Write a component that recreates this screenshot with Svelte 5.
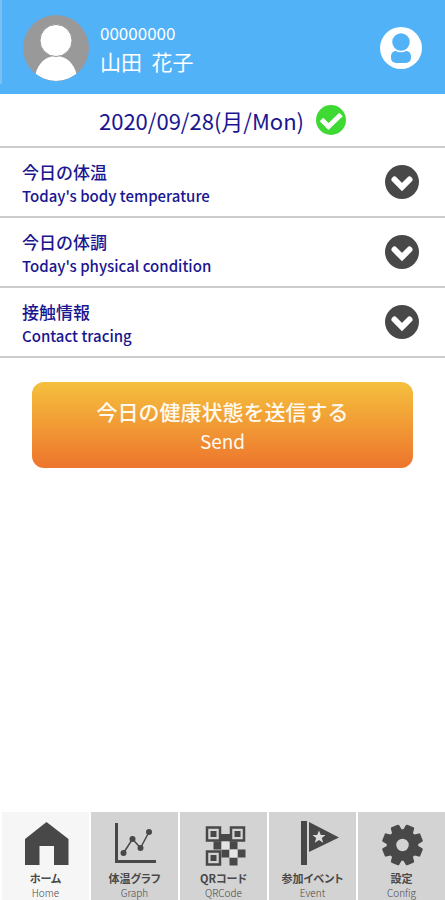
<script>
  const sections = [
    { ja: '今日の体温', en: "Today's body temperature" },
    { ja: '今日の体調', en: "Today's physical condition" },
    { ja: '接触情報', en: 'Contact tracing' }
  ];

  const tabs = [
    { id: 'home', ja: 'ホーム', en: 'Home' },
    { id: 'graph', ja: '体温グラフ', en: 'Graph' },
    { id: 'qr', ja: 'QRコード', en: 'QRCode' },
    { id: 'event', ja: '参加イベント', en: 'Event' },
    { id: 'config', ja: '設定', en: 'Config' }
  ];

  const teeth = [22.5, 67.5, 112.5, 157.5, 202.5, 247.5, 292.5, 337.5];
  let current = $state('home');
</script>

<div class="app">
  <header>
    <svg class="avatar" viewBox="0 0 66 66" aria-hidden="true">
      <clipPath id="avatar-clip"><circle cx="33" cy="33" r="33" /></clipPath>
      <circle cx="33" cy="33" r="33" fill="#999" />
      <g clip-path="url(#avatar-clip)">
        <path d="M12.500 59C15 49 22 41 33 41S51 49 53.500 59Q44 66 33 66T12.500 59Z" fill="#fff" />
      </g>
      <circle cx="33" cy="25.500" r="16" fill="#fff" stroke="#999" stroke-width="1" />
    </svg>
    <div class="user">
      <span class="number">00000000</span>
      <span class="name">山田&nbsp;&nbsp;花子</span>
    </div>
    <button class="account" aria-label="アカウント">
      <svg viewBox="0 0 42 42" aria-hidden="true">
        <circle cx="21" cy="21" r="21" fill="#fff" />
        <rect x="11" y="24" width="20" height="12" rx="5" fill="#52b2f8" />
        <circle cx="21" cy="15" r="9.500" fill="#52b2f8" stroke="#fff" stroke-width="1.500" />
      </svg>
    </button>
  </header>

  <main>
    <div class="date">
      <h1>2020/09/28(月/Mon)</h1>
      <svg viewBox="0 0 30 30" aria-hidden="true">
        <circle cx="15" cy="15" r="15" fill="#3fd934" />
        <path d="M5.500 14.500L12.500 21.500L25 9.500" fill="none" stroke="#fff" stroke-width="5" />
      </svg>
    </div>

    {#each sections as section}
      <button class="section">
        <span class="titles">
          <span class="ja">{section.ja}</span>
          <span class="en">{section.en}</span>
        </span>
        <svg viewBox="0 0 34 34" aria-hidden="true">
          <circle cx="17" cy="17" r="17" fill="#484848" />
          <path d="M9.500 14.500L17 22L24.500 14.500" fill="none" stroke="#fff" stroke-width="6" stroke-linecap="round" />
        </svg>
      </button>
    {/each}

    <button class="send">
      <span class="ja">今日の健康状態を送信する</span>
      <span class="en">Send</span>
    </button>
  </main>

  <nav>
    {#each tabs as tab}
      <button class="tab" class:active={current === tab.id} onclick={() => (current = tab.id)}>
        <svg viewBox="0 0 48 48" fill="#484848" aria-hidden="true">
          {#if tab.id === 'home'}
            <path d="M24.500 3L46.500 20V46H32V27H17.500V46H3V20Z" />
          {:else if tab.id === 'graph'}
            <path d="M4 4H7V41H45V44H4Z" />
            <path d="M12.500 34L21.500 20L29.500 29L38 13" fill="none" stroke="#484848" stroke-width="1.500" />
            <circle cx="12.500" cy="34" r="3" />
            <circle cx="21.500" cy="20" r="3" />
            <circle cx="29.500" cy="29" r="3" />
            <circle cx="38" cy="13" r="3" />
          {:else if tab.id === 'qr'}
            <g fill="none" stroke="#484848" stroke-width="2.500">
              <path d="M7 8.500H20V21.500H7ZM31 8.500H44V21.500H31ZM7 32.500H20V45.500H7Z" />
            </g>
            <path d="M10.500 12H16.500V18H10.500ZM34.500 12H40.500V18H34.500ZM10.500 36H16.500V42H10.500Z" />
            <path d="M21 15H30V22.500H21ZM13.500 22.500H21.500V30.500H13.500ZM29.500 22.500H37.500V30.500H29.500ZM21.500 30.500H29.500V38.500H21.500ZM37.500 30.500H45.500V38.500H37.500ZM29.500 38.500H37.500V46.500H29.500Z" />
            <path d="M21.500 22.500H29.500V30.500H21.500ZM29.500 30.500H37.500V38.500H29.500Z" fill="#e4e4e4" />
          {:else if tab.id === 'event'}
            <path d="M12 2H18V46H12Z" />
            <path d="M20 3L50 18.500L20 33Z" />
            <path d="M30 11.500L31.800 16H36.500L32.800 19L34.200 23.800L30 21L25.800 23.800L27.200 19L23.500 16H28.200Z" fill="#ddd" />
          {:else}
            <g transform="translate(24.500 26)">
              {#each teeth as angle}
                <path d="M-5.500 -12L-4.500 -19.500Q-4.300 -20.500 -3.300 -20.500H3.300Q4.300 -20.500 4.500 -19.500L5.500 -12Z" transform="rotate({angle})" />
              {/each}
              <circle r="11" fill="none" stroke="#484848" stroke-width="9.500" />
            </g>
          {/if}
        </svg>
        <span class="ja">{tab.ja}</span>
        <span class="en">{tab.en}</span>
      </button>
    {/each}
  </nav>
</div>

<style>
  :global(body) {
    background: #fff;
  }

  .app {
    display: flex;
    flex-direction: column;
    min-height: 100vh;
    font-family: 'Noto Sans CJK JP', sans-serif;
    font-weight: 500;
    color: #1a1690;
  }

  button {
    margin: 0;
    padding: 0;
    border: 0;
    background: none;
    color: inherit;
    font: inherit;
    cursor: pointer;
  }

  svg {
    display: block;
    flex: none;
  }

  header {
    display: flex;
    align-items: center;
    gap: 11px;
    padding: 15px 23px 13px;
    background:
      linear-gradient(#7cbff4, #7cbff4) 0 0 / 2px 84px no-repeat,
      #52b2f8;
    color: #fff;
  }

  .avatar {
    width: 66px;
    height: 66px;
  }

  .user {
    display: flex;
    flex: 1;
    flex-direction: column;
    padding-bottom: 2px;
    font-weight: 400;
  }

  .number {
    font-size: 17px;
    line-height: 28px;
  }

  .name {
    font-size: 21px;
    line-height: 28px;
  }

  .account svg {
    width: 42px;
    height: 42px;
  }

  main {
    flex: 1;
  }

  .date {
    display: flex;
    align-items: center;
    justify-content: center;
    gap: 12px;
    height: 52px;
    border-bottom: 2px solid #ccc;
  }

  h1 {
    margin: 0;
    font-size: 22px;
    font-weight: 400;
    line-height: 32px;
  }

  .date svg {
    width: 30px;
    height: 30px;
  }

  .section {
    display: flex;
    align-items: center;
    justify-content: space-between;
    width: 100%;
    padding: 12px 26px 8px 22px;
    border-bottom: 2px solid #ccc;
    text-align: left;
  }

  .section svg {
    width: 34px;
    height: 34px;
    margin-bottom: 4px;
  }

  .titles,
  .send {
    display: flex;
    flex-direction: column;
  }

  .titles .ja {
    font-size: 17px;
    line-height: 24px;
  }

  .titles .en {
    font-size: 15px;
    line-height: 24px;
  }

  .send {
    align-items: center;
    width: calc(100% - 64px);
    margin: 24px 32px;
    padding: 15px 0 13px;
    border-radius: 12px;
    background: linear-gradient(#f5c03d, #ed752d);
    color: #fffaf0;
  }

  .send .ja {
    font-size: 21px;
    line-height: 29px;
  }

  .send .en {
    font-size: 19px;
    font-weight: 400;
    line-height: 29px;
  }

  nav {
    display: flex;
    gap: 2px;
    padding-left: 2px;
  }

  .tab {
    display: flex;
    flex: 1 1 0;
    flex-direction: column;
    align-items: center;
    min-width: 0;
    padding-top: 7px;
    background: #d3d3d3;
    color: #484848;
    white-space: nowrap;
  }

  .tab.active {
    background: #f6f6f6;
  }

  .tab svg {
    width: 48px;
    height: 48px;
    overflow: visible;
  }

  .tab .ja {
    margin-top: 3px;
    font-size: 11px;
    font-weight: 700;
    line-height: 16px;
    font-feature-settings: 'palt';
  }

  .tab .en {
    font-size: 10px;
    font-weight: 300;
    line-height: 14px;
  }
</style>
